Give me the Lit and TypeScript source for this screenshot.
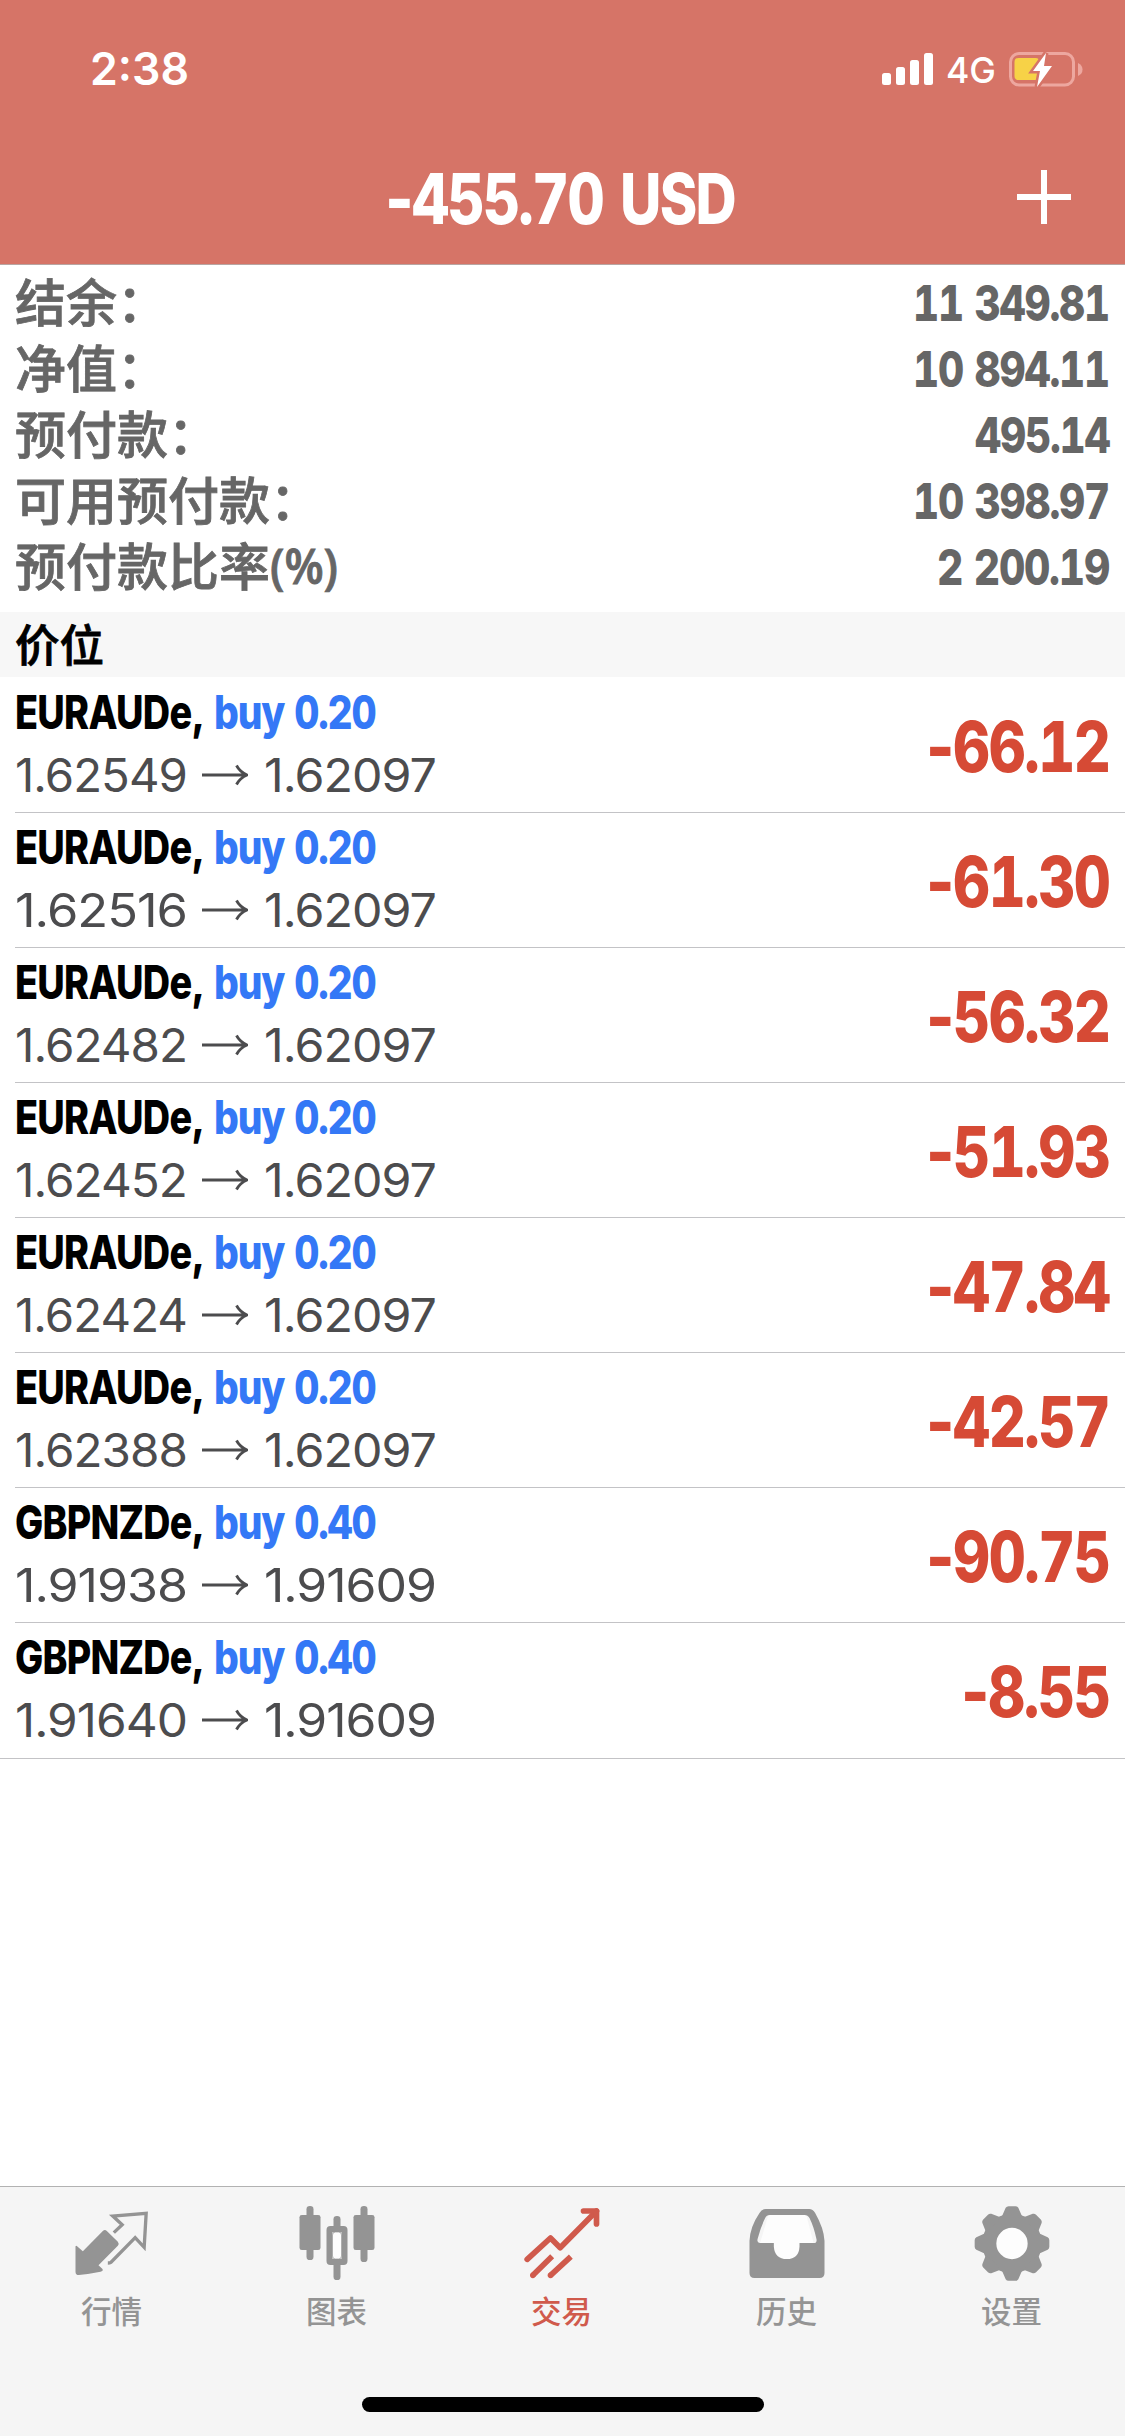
import { LitElement, html, css, svg } from "lit";
import { customElement, property } from "lit/decorators.js";

// One run of text, stretched horizontally to an exact width.
@customElement("fit-text")
class FitText extends LitElement {
  @property({ type: Number }) width = 100;
  @property() text = "";
  static styles = css`
    :host { display: inline-block; flex: none; white-space: pre; }
    .run { display: inline-block; transform-origin: 0 50%; }
  `;
  updated() {
    const run = this.renderRoot.querySelector(".run") as HTMLElement;
    this.style.width = this.width + "px";
    run.style.transform = "none";
    const natural = run.getBoundingClientRect().width;
    if (natural) run.style.transform = `scaleX(${this.width / natural})`;
  }
  render() {
    return html`<span class="run">${this.text}</span>`;
  }
}

const summary = [
  { label: "结余：", extra: "", value: "11 349.81", w: 196 },
  { label: "净值：", extra: "", value: "10 894.11", w: 196 },
  { label: "预付款：", extra: "", value: "495.14", w: 134.5 },
  { label: "可用预付款：", extra: "", value: "10 398.97", w: 196 },
  { label: "预付款比率", extra: "(%)", value: "2 200.19", w: 172 },
];

const positions = [
  ["EURAUDe,", "0.20", "1.62549", "1.62097", "66.12"],
  ["EURAUDe,", "0.20", "1.62516", "1.62097", "61.30"],
  ["EURAUDe,", "0.20", "1.62482", "1.62097", "56.32"],
  ["EURAUDe,", "0.20", "1.62452", "1.62097", "51.93"],
  ["EURAUDe,", "0.20", "1.62424", "1.62097", "47.84"],
  ["EURAUDe,", "0.20", "1.62388", "1.62097", "42.57"],
  ["GBPNZDe,", "0.40", "1.91938", "1.91609", "90.75"],
  ["GBPNZDe,", "0.40", "1.91640", "1.91609", "8.55"],
];

const tooth = "M-34-78L-29-84L-19-107Q-16-112-10-112H10Q16-112 19-107L29-84L34-78Z";

const tabs = [
  {
    label: "行情",
    box: "217.5 102 240 240",
    icon: svg`<path fill="currentColor" d="M228 227L247 244L307 183Q313 177 319 183L352 215Q357 221 352 227L294 286L306 297Q309 303 300 305Q265 312 235 315Q225 315 225 305V229Z"/>
      <path fill="none" stroke="currentColor" stroke-width="10" d="M340 188L365 164L337 138L437 130L431 232L404 203L331 277Q328 279 322 279"/>`,
  },
  {
    label: "图表",
    box: "892.5 102 240 240",
    icon: svg`<g fill="currentColor"><rect x="897" y="135" width="63" height="105" rx="7"/><rect x="918" y="108" width="21" height="162" rx="10"/>
      <rect x="999" y="138" width="21" height="60" rx="10"/><rect x="999" y="270" width="21" height="60" rx="10"/>
      <rect x="1059" y="135" width="63" height="105" rx="7"/><rect x="1080" y="108" width="21" height="168" rx="10"/></g>
      <rect x="987" y="177" width="45" height="99" rx="3" fill="none" stroke="currentColor" stroke-width="18"/>
      <rect x="996" y="186" width="27" height="81" rx="9" fill="#fdfdfd" stroke="currentColor" stroke-width="2"/>`,
  },
  {
    label: "交易",
    box: "367.5 102 240 240",
    icon: svg`<g fill="none" stroke="currentColor" stroke-width="17" stroke-linecap="round" stroke-linejoin="round">
      <path d="M380 268L450 204L479 233L588 123"/><path d="M549 123H588V162"/></g>
      <g stroke="currentColor" stroke-width="17"><path d="M397 316L455 259M450 316L511 260"/></g>
      <g fill="currentColor"><circle cx="397" cy="316" r="8.5"/><circle cx="450" cy="316" r="8.5"/></g>`,
  },
  {
    label: "历史",
    box: "82.5 102 240 240",
    icon: svg`<path fill="#fdfdfd" d="M145 130H256L280 222H238V270H160V222H118Z"/><path fill="currentColor" fill-rule="evenodd" d="M136 117H266Q277 117 284 129Q310 175 312 212V309Q312 324 297 324H102Q87 324 87 309V212Q89 170 117 129Q124 117 136 117ZM148 135Q138 135 134 144Q120 172 111 208Q109 219 118 219H160V230Q163 267 199 267Q235 267 237 230V219H280Q290 219 288 208Q280 170 267 144Q262 135 252 135Z"/>`,
  },
  {
    label: "设置",
    box: "757.5 102 240 240",
    icon: svg`<g transform="translate(874.5 220.5)"><circle r="68" fill="#fdfdfd" stroke="currentColor" stroke-width="42"/>
      <g fill="currentColor">${[0, 1, 2, 3, 4, 5, 6, 7].map((i) => svg`<path transform="rotate(${i * 45})" d="${tooth}"/>`)}</g></g>`,
  },
];

@customElement("app-root")
class AppRoot extends LitElement {
  static styles = css`
    :host { display: block; font-family: Inter, "Noto Sans CJK SC", sans-serif; }
    .screen { width: 1125px; height: 2436px; background: #fff; display: flex; flex-direction: column; overflow: hidden; }
    .head { height: 264px; background: #d67467; color: #fff; border-bottom: 1px solid #b9a5a2; flex: none; }
    .status { height: 132px; display: flex; align-items: flex-start; padding: 0 42px 0 90px; }
    .time { font: 600 45px/138px Inter, sans-serif; }
    .signal { margin: 52px 12px 0 auto; }
    .net { font: 450 36px/141px Inter, sans-serif; }
    .battery { margin: 50px 0 0 12px; }
    .nav { height: 132px; display: grid; grid-template-columns: 385px 1fr 54px; padding-right: 54px; }
    .title { grid-column: 2; display: flex; font-weight: 800; font-size: 70px; line-height: 133px; letter-spacing: -0.03em; }
    .digits { font-variant-numeric: tabular-nums; font-kerning: none; }
    .unit { margin-left: 17px; }
    .plus { margin-top: 38px; }
    .summary { height: 347px; padding: 2px 16px 0 15px; box-sizing: border-box; color: #666; flex: none; }
    .line { height: 66px; display: flex; align-items: flex-start; justify-content: space-between; }
    .label { font: 500 51px/66px "Noto Sans CJK SC", sans-serif; display: flex; -webkit-text-stroke: 0.8px currentColor; }
    .extra { font-family: "Open Sans", sans-serif; font-size: 48px; line-height: 69px; font-weight: 600; }
    .value { font-weight: 780; font-size: 50px; line-height: 72px; letter-spacing: -0.03em; word-spacing: 0.05em; }
    .section { height: 65px; background: #f7f7f7; padding-left: 15px; font: 500 44.5px/61px "Noto Sans CJK SC", sans-serif; color: #000; margin-bottom: 1px; flex: none; -webkit-text-stroke: 0.8px currentColor; }
    .row { height: 135px; box-sizing: border-box; margin-left: 15px; padding-right: 16px; border-bottom: 1px solid #c3c3c6; display: flex; justify-content: space-between; align-items: flex-start; flex: none; }
    .row.last { height: 136px; margin-left: 0; padding-left: 15px; }
    .deal { display: flex; gap: 10px; font-weight: 800; font-size: 47px; line-height: 68px; color: #000; letter-spacing: -0.02em; }
    .side { color: #3478f6; word-spacing: 0.02em; letter-spacing: -0.03em; font-variant-numeric: tabular-nums; }
    .prices { display: flex; font: 400 46.5px/58px Inter, sans-serif; color: #4c4c4e; letter-spacing: -0.02em; }
    .arrow { margin: 17px 16px 0 15px; }
    .profit { display: flex; font-weight: 780; font-size: 70px; line-height: 137px; color: #d64a35; letter-spacing: -0.025em; }
    .space { flex: 1; }
    .tabs { height: 250px; box-sizing: border-box; border-top: 1px solid #b2b2b2; background: #f5f5f5; flex: none; display: flex; flex-direction: column; align-items: center; }
    .tabrow { display: grid; grid-template-columns: repeat(5, 225px); height: 210px; }
    .tab { display: flex; flex-direction: column; align-items: center; color: #949494; padding-top: 17px; font: 500 30.5px/44px "Noto Sans CJK SC", sans-serif; }
    .tab span { padding-right: 2px; }
    .tab svg { margin-bottom: 4px; }
    .tab.on { color: #d05a4c; }
    .home { width: 402px; height: 15px; border-radius: 8px; background: #000; }
  `;

  render() {
    return html`<div class="screen">
      <div class="head">
        <div class="status">
          <fit-text class="time" .width=${99} text="2:38"></fit-text>
          <svg class="signal" width="52" height="34" fill="#fff"><rect x="0" y="21" width="9" height="12" rx="2.5"/><rect x="14" y="15" width="9" height="18" rx="2.5"/><rect x="28" y="8" width="9" height="25" rx="2.5"/><rect x="42" y="1" width="9" height="32" rx="2.5"/></svg>
          <fit-text class="net" .width=${50} text="4G"></fit-text>
          <svg class="battery" width="75" height="38">
            <rect x="2.5" y="3.5" width="63" height="31.5" rx="8.5" fill="none" stroke="#eda79f" stroke-width="3"/>
            <path d="M70 13Q74.500 15 74.500 19.500T70 26Z" fill="#eda79f"/>
            <rect x="6.500" y="8" width="25" height="22" rx="4" fill="#f7d247"/>
            <path d="M38 3L25 21H32L29 37L44 16H36Z" fill="#fff" stroke="#d67467" stroke-width="5" paint-order="stroke"/>
          </svg>
        </div>
        <div class="nav">
          <div class="title"><fit-text .width=${27} text="-"></fit-text><fit-text class="digits" .width=${191} text="455.70"></fit-text><fit-text class="unit" .width=${115} text="USD"></fit-text></div>
          <svg class="plus" width="54" height="54"><path d="M27 0V54M0 27H54" stroke="#fff" stroke-width="6"/></svg>
        </div>
      </div>
      <div class="summary">
        ${summary.map((s) => html`<div class="line">
          <span class="label">${s.label}${s.extra ? html`<fit-text class="extra" .width=${68} .text=${s.extra}></fit-text>` : ""}</span>
          <fit-text class="value digits" .width=${s.w} .text=${s.value}></fit-text>
        </div>`)}
      </div>
      <div class="section">价位</div>
      ${positions.map(([sym, vol, from, to, pl], i) => html`<div class="row ${i === positions.length - 1 ? "last" : ""}">
        <div>
          <div class="deal"><fit-text .width=${189} .text=${sym}></fit-text><fit-text class="side" .width=${161.5} .text=${"buy " + vol}></fit-text></div>
          <div class="prices digits">
            <fit-text .width=${172} .text=${from}></fit-text>
            <svg class="arrow" width="46" height="24" fill="none" stroke="currentColor" stroke-width="2.8"><path d="M0 12H44M34.500 2.500Q38 9 45 12Q38 15 34.500 21.500"/></svg>
            <fit-text .width=${172} .text=${to}></fit-text>
          </div>
        </div>
        <div class="profit"><fit-text .width=${27} text="-"></fit-text><fit-text class="digits" .width=${pl.length > 4 ? 156.5 : 121.5} .text=${pl}></fit-text></div>
      </div>`)}
      <div class="space"></div>
      <div class="tabs">
        <div class="tabrow">
          ${tabs.map((t, i) => html`<div class="tab ${i === 2 ? "on" : ""}"><svg width="80" height="80" viewBox=${t.box}>${t.icon}</svg><span>${t.label}</span></div>`)}
        </div>
        <div class="home"></div>
      </div>
    </div>`;
  }
}
